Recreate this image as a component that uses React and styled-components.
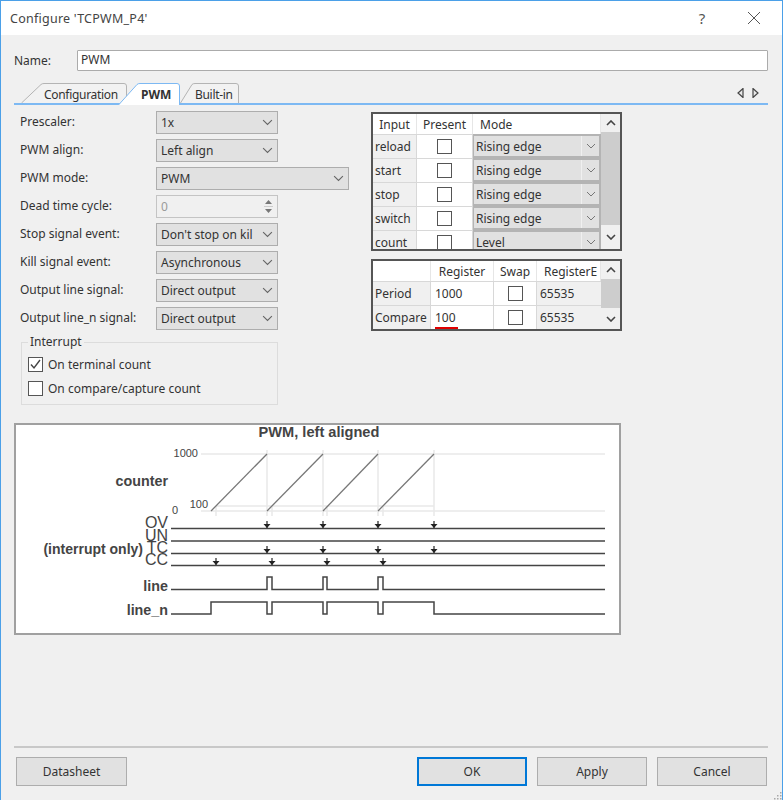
import React from "react";
import styled, { createGlobalStyle } from "styled-components";

const GlobalStyle = createGlobalStyle`
  html, body {
    margin: 0;
    padding: 0;
    background: #f0f0f0;
  }
  * {
    box-sizing: border-box;
  }
`;

const inputs = [
  { name: "reload", mode: "Rising edge" },
  { name: "start", mode: "Rising edge" },
  { name: "stop", mode: "Rising edge" },
  { name: "switch", mode: "Rising edge" },
  { name: "count", mode: "Level" },
];

const formRows = [
  { label: "Prescaler:", value: "1x" },
  { label: "PWM align:", value: "Left align" },
  { label: "PWM mode:", value: "PWM", wide: true },
  { label: "Dead time cycle:", value: "0", spin: true },
  { label: "Stop signal event:", value: "Don't stop on kil" },
  { label: "Kill signal event:", value: "Asynchronous" },
  { label: "Output line signal:", value: "Direct output" },
  { label: "Output line_n signal:", value: "Direct output" },
];

const Chevron = ({ size = 11, weight = 1, up = false, color = "#666" }) => (
  <svg width={size} height={size * 0.6} viewBox="0 0 10 6">
    <polyline
      points={up ? "1,5 5,1 9,5" : "1,1 5,5 9,1"}
      fill="none"
      stroke={color}
      strokeWidth={weight}
    />
  </svg>
);

const SpinArrows = () => (
  <svg width="9" height="15" viewBox="0 0 9 15">
    <polygon points="4.5,1 8,5 1,5" fill="#777" />
    <line x1="0" y1="7.5" x2="9" y2="7.5" stroke="#ccc" />
    <polygon points="1,10 8,10 4.5,14" fill="#777" />
  </svg>
);

const CloseIcon = () => (
  <svg width="14" height="14" viewBox="0 0 14 14">
    <path d="M1 1 L13 13 M13 1 L1 13" stroke="#555" strokeWidth="1" fill="none" />
  </svg>
);

const TabArrows = () => (
  <svg width="22" height="10" viewBox="0 0 22 10">
    <polygon points="6,0.5 6,9.5 1,5" fill="#e8e8e8" stroke="#444" strokeWidth="1.2" />
    <polygon points="16,0.5 16,9.5 21,5" fill="#e8e8e8" stroke="#444" strokeWidth="1.2" />
  </svg>
);

const TabShape = ({ width, slant, active }) => {
  const height = active ? 22 : 20;
  return (
    <TabSvg width={width} height={height} viewBox={`0 0 ${width} ${height}`}>
      <path
        d={`M0.5 ${height} L${slant} 1.5 Q${slant + 1} 0.5 ${slant + 3} 0.5 L${width - 3} 0.5 Q${width - 0.5} 0.5 ${width - 0.5} 3 L${width - 0.5} ${height}`}
        fill={active ? "#ffffff" : "#f2f2f2"}
        stroke={active ? "#7db9f3" : "#b4b4b4"}
        strokeWidth="1"
      />
    </TabSvg>
  );
};

const Grip = () => (
  <GripSvg width="9" height="9" viewBox="0 0 9 9">
    <g fill="#a8a8a8">
      <rect x="7" y="1" width="1.5" height="1.5" />
      <rect x="4" y="4" width="1.5" height="1.5" />
      <rect x="7" y="4" width="1.5" height="1.5" />
      <rect x="1" y="7" width="1.5" height="1.5" />
      <rect x="4" y="7" width="1.5" height="1.5" />
      <rect x="7" y="7" width="1.5" height="1.5" />
    </g>
  </GripSvg>
);

const CheckMark = () => (
  <svg width="13" height="13" viewBox="0 0 13 13">
    <polyline points="2,6.5 5,10 11,2" fill="none" stroke="#444" strokeWidth="1.4" />
  </svg>
);

const Scroll = ({ thumb, top }) => (
  <ScrollTrack>
    <ScrollEnd $height={top}>
      <Chevron up size={10} weight={1.6} color="#444" />
    </ScrollEnd>
    <ScrollThumb $height={thumb} />
    <ScrollEnd $grow>
      <Chevron size={10} weight={1.6} color="#444" />
    </ScrollEnd>
  </ScrollTrack>
);

const ticksA = [267, 323, 378, 434];
const ticksB = [216, 272, 327, 383];

const DownArrow = ({ x, y }) => (
  <g>
    <line x1={x} y1={y - 7} x2={x} y2={y} stroke="#333" strokeWidth="1.3" />
    <polygon points={`${x - 3.5},${y - 4} ${x + 3.5},${y - 4} ${x},${y}`} fill="#222" />
  </g>
);

const Diagram = () => (
  <svg width="603" height="208" viewBox="16 425 603 208">
    <text x="319" y="437" textAnchor="middle" fontSize="14.6" fontWeight="700" fill="#444" fontFamily="Liberation Sans, sans-serif">
      PWM, left aligned
    </text>

    <g stroke="#e8e8e8" strokeWidth="1.5" fill="none">
      <line x1="201" y1="454" x2="605" y2="454" />
      <line x1="201" y1="511" x2="605" y2="511" />
      <line x1="216" y1="506" x2="434" y2="506" />
      {ticksA.map((x) => (
        <line key={x} x1={x} y1="450" x2={x} y2="516" />
      ))}
      {ticksB.map((x) => (
        <line key={x} x1={x} y1="506" x2={x} y2="516" />
      ))}
    </g>
    <g stroke="#777" strokeWidth="1.3">
      <line x1="211" y1="511" x2="267" y2="454" />
      <line x1="267" y1="511" x2="323" y2="454" />
      <line x1="323" y1="511" x2="378" y2="454" />
      <line x1="378" y1="511" x2="434" y2="454" />
    </g>

    <g fontFamily="Liberation Sans, sans-serif" fill="#444" textAnchor="end">
      <text x="198" y="457" fontSize="11">1000</text>
      <text x="208" y="508" fontSize="11">100</text>
      <text x="178" y="514" fontSize="11">0</text>
      <text x="168" y="486" fontSize="14.3" fontWeight="700">counter</text>
      <text x="168" y="528" fontSize="16">OV</text>
      <text x="168" y="541" fontSize="16">UN</text>
      <text x="168" y="553" fontSize="16">TC</text>
      <text x="168" y="565" fontSize="16">CC</text>
      <text x="143" y="554" fontSize="14" fontWeight="700">(interrupt only)</text>
      <text x="168" y="591" fontSize="14.3" fontWeight="700">line</text>
      <text x="168" y="615" fontSize="14.3" fontWeight="700">line_n</text>
    </g>

    <g stroke="#444" strokeWidth="1.5" fill="none">
      <line x1="171" y1="528.5" x2="605" y2="528.5" />
      <line x1="171" y1="541" x2="605" y2="541" />
      <line x1="171" y1="553.5" x2="605" y2="553.5" />
      <line x1="171" y1="565.5" x2="605" y2="565.5" />
      <path d="M171 589.5 H267 V577 H272 V589.5 H323 V577 H327 V589.5 H378 V577 H383 V589.5 H605" />
      <path d="M171 614 H211 V602 H267 V614 H272 V602 H323 V614 H327 V602 H378 V614 H383 V602 H434 V614 H605" />
    </g>

    {ticksA.map((x) => (
      <DownArrow key={`ov${x}`} x={x} y={528} />
    ))}
    {ticksA.map((x) => (
      <DownArrow key={`tc${x}`} x={x} y={553} />
    ))}
    {ticksB.map((x) => (
      <DownArrow key={`cc${x}`} x={x} y={565} />
    ))}
  </svg>
);

const App = () => {
  return (
    <Window>
      <GlobalStyle />
      <TitleBar>
        <Title>Configure 'TCPWM_P4'</Title>
        <Help>?</Help>
        <CloseIcon />
      </TitleBar>

      <Main>
        <NameRow>
          <NameLabel>Name:</NameLabel>
          <NameInput>PWM</NameInput>
        </NameRow>

        <TabBar>
          <Tab $width={106}>
            <TabShape width={106} slant={20} />
            <TabText $left={23} $tight>Configuration</TabText>
          </Tab>
          <Tab $width={62} $active $overlap={9}>
            <TabShape width={62} slant={19} active />
            <TabText $left={23} $bold>PWM</TabText>
          </Tab>
          <Tab $width={59} $back>
            <TabShape width={59} slant={12} />
            <TabText $left={15} $tight>Built-in</TabText>
          </Tab>
          <TabNav>
            <TabArrows />
          </TabNav>
        </TabBar>

        <Panels>
          <FormColumn>
            {formRows.map((row) => (
              <FormRow key={row.label}>
                <FieldLabel>{row.label}</FieldLabel>
                {row.spin ? (
                  <Spin>
                    <span>{row.value}</span>
                    <SpinButtons>
                      <SpinArrows />
                    </SpinButtons>
                  </Spin>
                ) : (
                  <Select $wide={row.wide}>
                    <span>{row.value}</span>
                    <Chevron />
                  </Select>
                )}
              </FormRow>
            ))}
            <Group>
              <GroupTitle>Interrupt</GroupTitle>
              <CheckRow>
                <Box>
                  <CheckMark />
                </Box>
                On terminal count
              </CheckRow>
              <CheckRow>
                <Box />
                On compare/capture count
              </CheckRow>
            </Group>
          </FormColumn>

          <TableColumn>
            <TableFrame $height={139}>
              <InputGrid>
                <HeadCell $center>Input</HeadCell>
                <HeadCell $center>Present</HeadCell>
                <HeadCell $pad={7}>Mode</HeadCell>
                {inputs.map((input) => (
                  <React.Fragment key={input.name}>
                    <RowName>{input.name}</RowName>
                    <BoxCell>
                      <Box />
                    </BoxCell>
                    <ModeCell>
                      <ModeValue>{input.mode}</ModeValue>
                      <ModeArrow>
                        <Chevron size={10} color="#777" />
                      </ModeArrow>
                    </ModeCell>
                  </React.Fragment>
                ))}
              </InputGrid>
              <Scroll top={18} thumb={93} />
            </TableFrame>

            <TableFrame $height={72}>
              <RegisterGrid>
                <HeadCell />
                <HeadCell $center>Register</HeadCell>
                <HeadCell $center>Swap</HeadCell>
                <HeadCell $pad={7}>RegisterE</HeadCell>
                <RowName>Period</RowName>
                <ValueCell>1000</ValueCell>
                <BoxCell>
                  <Box />
                </BoxCell>
                <ReadOnlyCell>65535</ReadOnlyCell>
                <RowName>Compare</RowName>
                <ValueCell>
                  100
                  <ErrorMark />
                </ValueCell>
                <BoxCell>
                  <Box />
                </BoxCell>
                <ReadOnlyCell>65535</ReadOnlyCell>
              </RegisterGrid>
              <Scroll top={18} thumb={29} />
            </TableFrame>
          </TableColumn>
        </Panels>

        <DiagramFrame>
          <Diagram />
        </DiagramFrame>

        <Footer>
          <Separator />
          <ButtonRow>
            <Button $width={111}>Datasheet</Button>
            <RightButtons>
              <Button $default>OK</Button>
              <Button>Apply</Button>
              <Button>Cancel</Button>
            </RightButtons>
          </ButtonRow>
        </Footer>
      </Main>
      <Grip />
    </Window>
  );
};

const Window = styled.div`
  position: relative;
  width: 783px;
  height: 800px;
  display: flex;
  flex-direction: column;
  background: #f0f0f0;
  border: 1px solid #4ba0e8;
  border-bottom: none;
  font-family: "Noto Sans", sans-serif;
  font-size: 12px;
  color: #333;
  overflow: hidden;
`;

const TitleBar = styled.div`
  height: 34px;
  flex: none;
  display: flex;
  align-items: center;
  padding: 0 21px 0 9px;
  background: #ffffff;
`;

const Title = styled.div`
  flex: 1;
  font-size: 12.5px;
  letter-spacing: 0.25px;
  color: #444;
`;

const Help = styled.div`
  width: 14px;
  margin-right: 38px;
  font-size: 15px;
  text-align: center;
  color: #555;
`;

const Main = styled.div`
  flex: 1;
  display: flex;
  flex-direction: column;
  padding: 15px 14px 0 13px;
`;

const NameRow = styled.div`
  display: flex;
  align-items: center;
  height: 21px;
`;

const NameLabel = styled.div`
  width: 63px;
`;

const NameInput = styled.div`
  flex: 1;
  height: 21px;
  padding: 0 3px;
  line-height: 18px;
  background: #ffffff;
  border: 1.5px solid #ababab;
  border-radius: 1px;
`;

const TabBar = styled.div`
  display: flex;
  align-items: flex-start;
  box-sizing: content-box;
  height: 20px;
  padding: 12px 0 0 7px;
  border-bottom: 2px solid #7db9f3;
`;

const Tab = styled.div`
  position: relative;
  width: ${(p) => p.$width}px;
  height: ${(p) => (p.$active ? 22 : 20)}px;
  margin-left: ${(p) => (p.$overlap ? -p.$overlap : 0)}px;
  z-index: ${(p) => (p.$active ? 2 : p.$back ? 0 : 1)};
`;

const TabSvg = styled.svg`
  position: absolute;
  left: 0;
  top: 0;
`;

const TabText = styled.span`
  position: absolute;
  left: ${(p) => p.$left}px;
  top: 3px;
  font-weight: ${(p) => (p.$bold ? 700 : 400)};
  letter-spacing: ${(p) => (p.$tight ? -0.3 : 0)}px;
  white-space: nowrap;
`;

const TabNav = styled.div`
  margin-left: auto;
  margin-right: 9px;
  align-self: center;
  display: flex;
`;

const Panels = styled.div`
  display: flex;
  gap: 8px;
  padding: 6px 0 0 6px;
`;

const FormColumn = styled.div`
  width: 343px;
  display: flex;
  flex-direction: column;
`;

const FormRow = styled.div`
  display: flex;
  align-items: flex-start;
  height: 28px;
`;

const FieldLabel = styled.div`
  width: 136px;
  line-height: 22px;
  white-space: nowrap;
`;

const Select = styled.div`
  width: ${(p) => (p.$wide ? 193 : 122)}px;
  height: 23px;
  display: flex;
  align-items: center;
  justify-content: space-between;
  padding: 0 4px 0 4px;
  background: #e1e1e1;
  border: 1px solid #adadad;
  white-space: nowrap;
  overflow: hidden;
`;

const Spin = styled.div`
  width: 122px;
  height: 23px;
  display: flex;
  align-items: center;
  justify-content: space-between;
  padding: 0 1px 0 4px;
  background: #f0f0f0;
  border: 1px solid #c4c4c4;
  color: #9a9a9a;
`;

const SpinButtons = styled.div`
  width: 16px;
  height: 100%;
  display: flex;
  align-items: center;
  justify-content: center;
`;

const Group = styled.fieldset`
  width: 257px;
  height: 70px;
  margin: 0 0 0 1px;
  padding: 3px 0 0 6px;
  border: 1px solid #dcdcdc;
  display: flex;
  flex-direction: column;
`;

const GroupTitle = styled.legend`
  padding: 0 2px;
  margin-left: 0;
  line-height: 14px;
`;

const CheckRow = styled.label`
  display: flex;
  align-items: center;
  gap: 5px;
  height: 24px;
  white-space: nowrap;
`;

const Box = styled.span`
  width: 15px;
  height: 15px;
  flex: none;
  display: inline-flex;
  align-items: center;
  justify-content: center;
  background: #ffffff;
  border: 1px solid #555;
`;

const TableColumn = styled.div`
  width: 251px;
  display: flex;
  flex-direction: column;
  gap: 8px;
  padding-top: 1px;
`;

const TableFrame = styled.div`
  display: flex;
  height: ${(p) => p.$height}px;
  background: #ffffff;
  border: 2px solid #555;
  overflow: hidden;
`;

const InputGrid = styled.div`
  flex: 1;
  display: grid;
  grid-template-columns: 44px 56px 128px;
  grid-template-rows: 20px repeat(5, 24px);
  min-width: 0;
`;

const RegisterGrid = styled.div`
  flex: 1;
  display: grid;
  grid-template-columns: 58px 63px 43px 64px;
  grid-template-rows: 20px 24px 24px;
  min-width: 0;
`;

const HeadCell = styled.div`
  display: flex;
  align-items: center;
  justify-content: ${(p) => (p.$center ? "center" : "flex-start")};
  padding-left: ${(p) => p.$pad ?? (p.$center ? 0 : 4)}px;
  background: #ffffff;
  border-right: 1px solid #e6e6e6;
  white-space: nowrap;
  overflow: hidden;
`;

const RowName = styled.div`
  display: flex;
  align-items: center;
  padding-left: 2px;
  background: #f0f0f0;
  border-top: 1px solid #d8d8d8;
  border-right: 1px solid #d8d8d8;
  white-space: nowrap;
`;

const BoxCell = styled.div`
  display: flex;
  align-items: center;
  justify-content: center;
  background: #ffffff;
  border-top: 1px solid #d8d8d8;
  border-right: 1px solid #d8d8d8;
`;

const ModeCell = styled.div`
  display: flex;
  background: #e1e1e1;
  border: 2px solid #b4b4b4;
  border-left-width: 1px;
`;

const ModeValue = styled.div`
  flex: 1;
  display: flex;
  align-items: center;
  padding-left: 2px;
`;

const ModeArrow = styled.div`
  width: 18px;
  display: flex;
  align-items: center;
  justify-content: center;
  border-left: 1px solid #f0f0f0;
`;

const ValueCell = styled.div`
  position: relative;
  display: flex;
  align-items: center;
  padding-left: 4px;
  background: #ffffff;
  border-top: 1px solid #d8d8d8;
  border-right: 1px solid #d8d8d8;
`;

const ErrorMark = styled.span`
  position: absolute;
  left: 4px;
  bottom: 0;
  width: 23px;
  height: 2px;
  background: #e00000;
`;

const ReadOnlyCell = styled.div`
  display: flex;
  align-items: center;
  padding-left: 3px;
  background: #f0f0f0;
  border-top: 1px solid #d8d8d8;
`;

const ScrollTrack = styled.div`
  width: 19px;
  flex: none;
  display: flex;
  flex-direction: column;
  background: #f0f0f0;
`;

const ScrollEnd = styled.div`
  flex: ${(p) => (p.$grow ? 1 : "none")};
  height: ${(p) => (p.$height ? `${p.$height}px` : "auto")};
  display: flex;
  align-items: center;
  justify-content: center;
`;

const ScrollThumb = styled.div`
  height: ${(p) => p.$height}px;
  flex: none;
  background: #cdcdcd;
`;

const DiagramFrame = styled.div`
  width: 607px;
  height: 212px;
  margin-top: 18px;
  background: #ffffff;
  border: 2px solid #a0a0a0;
  svg {
    display: block;
  }
`;

const Footer = styled.div`
  margin-top: auto;
  padding-bottom: 14px;
`;

const Separator = styled.div`
  height: 2px;
  background: #c8c8c8;
`;

const ButtonRow = styled.div`
  display: flex;
  justify-content: space-between;
  padding: 9px 1px 0 2px;
`;

const RightButtons = styled.div`
  display: flex;
  gap: 10px;
`;

const Button = styled.div`
  width: ${(p) => p.$width ?? 110}px;
  height: 29px;
  display: flex;
  align-items: center;
  justify-content: center;
  background: #e1e1e1;
  border: ${(p) => (p.$default ? "2px solid #0078d7" : "1px solid #adadad")};
`;

const GripSvg = styled.svg`
  position: absolute;
  right: 0;
  bottom: 0;
`;

export default App;
